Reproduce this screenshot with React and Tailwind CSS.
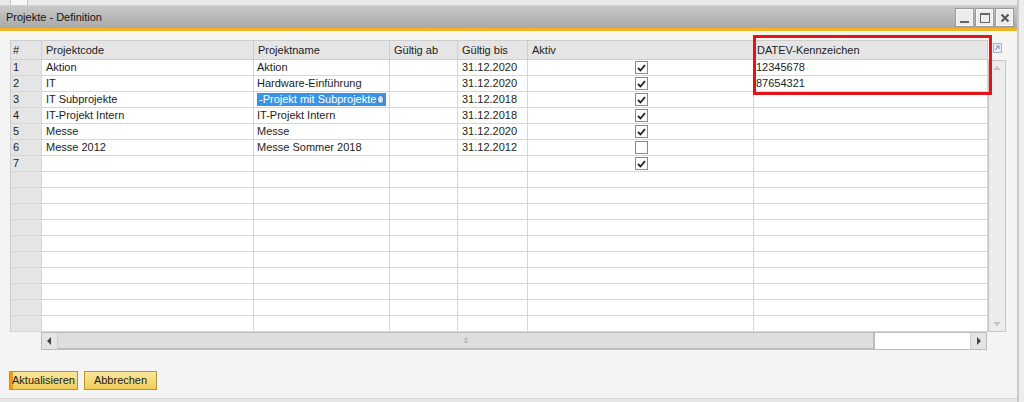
import React from 'react';

const cols = 'grid grid-cols-[31px_212px_136px_68px_70px_226px_234px]';

const rows = [
  { code: 'Aktion', name: 'Aktion', bis: '31.12.2020', aktiv: true, datev: '12345678' },
  { code: 'IT', name: 'Hardware-Einführung', bis: '31.12.2020', aktiv: true, datev: '87654321' },
  { code: 'IT Subprojekte', name: '-Projekt mit Subprojekte', bis: '31.12.2018', aktiv: true, selected: true },
  { code: 'IT-Projekt Intern', name: 'IT-Projekt Intern', bis: '31.12.2018', aktiv: true },
  { code: 'Messe', name: 'Messe', bis: '31.12.2020', aktiv: true },
  { code: 'Messe 2012', name: 'Messe Sommer 2018', bis: '31.12.2012', aktiv: false },
  { code: '', name: '', bis: '', aktiv: true },
];

const Check = ({ on }) => (
  <span className="w-[13px] h-[13px] border border-[#8a8a8a] bg-white flex items-center justify-center">
    {on && (
      <svg width="9" height="8" viewBox="0 0 9 8">
        <path d="M1 4 L3.5 6.5 L8 1" fill="none" stroke="#222" strokeWidth="1.8" />
      </svg>
    )}
  </span>
);

const cell = 'h-[16px] border-r border-b border-[#d6d6d6] px-[3px] leading-[15px] whitespace-nowrap overflow-hidden';

const WinBtn = ({ children }) => (
  <div className="w-[17px] h-[17px] bg-[#ececec] border border-[#f8f8f8] shadow-[0_0_0_1px_#9a9a9a] flex items-center justify-center">
    {children}
  </div>
);

export default function App() {
  const empty = Array.from({ length: 10 }, (_, i) => i);
  return (
    <div className="w-[1024px] h-[402px] flex bg-[#f4f4f4] overflow-hidden text-[11px] text-[#1c1c1c]" style={{ fontFamily: '"Liberation Sans", Arial, sans-serif' }}>
      <div className="w-[1017px] flex flex-col">
        {/* top strip */}
        <div className="h-[6px] bg-[#e9e9e9] border-b border-[#cfcfcf] flex">
          <div className="ml-[10px] w-[18px] border-x border-[#c4c4c4] bg-[#f7f7f7]" />
        </div>
        {/* title bar */}
        <div className="h-[22px] bg-gradient-to-b from-[#c9c9c9] to-[#a9a9a9] flex items-center pl-[6px] pr-[4px]">
          <span className="text-[11px] text-[#151515]">Projekte - Definition</span>
          <div className="ml-auto flex gap-[3px] mt-[1px]">
            <WinBtn>
              <span className="w-[9px] h-[2px] bg-[#666] mt-[8px]" />
            </WinBtn>
            <WinBtn>
              <span className="w-[10px] h-[10px] border border-[#666] border-t-2" />
            </WinBtn>
            <WinBtn>
              <svg width="10" height="10" viewBox="0 0 10 10">
                <path d="M1.5 1.5 L8.5 8.5 M8.5 1.5 L1.5 8.5" stroke="#555" strokeWidth="2" />
              </svg>
            </WinBtn>
          </div>
        </div>
        <div className="h-[3px] bg-[#efb526]" />
        <div className="h-[9px] bg-gradient-to-b from-[#fbf6ea] to-[#f5f5f5]" />

        {/* grid */}
        <div className="flex pl-[10px] relative">
          <div className="flex flex-col">
            <div className={`${cols} bg-[#e5e5e5] border-t border-l border-[#cdcdcd]`}>
              {['#', 'Projektcode', 'Projektname', 'Gültig ab', 'Gültig bis', 'Aktiv', 'DATEV-Kennzeichen'].map((h, i) => (
                <div key={h} className={`h-[19px] border-r border-b border-[#cdcdcd] leading-[18px] ${i === 0 ? 'pl-[2px]' : i === 6 ? 'pl-[3px]' : 'pl-[4px]'}`}>
                  {h}
                </div>
              ))}
            </div>
            <div className="border-l border-[#cdcdcd]">
              {rows.map((r, i) => (
                <div key={i} className={cols}>
                  <div className={`${cell} bg-[#e5e5e5] pl-[2px]`}>{i + 1}</div>
                  <div className={`${cell} bg-white pl-[4px]`}>{r.code}</div>
                  <div className={`${cell} bg-white ${r.selected ? 'p-[1px] bg-[#f7e3a0]' : ''}`}>
                    {r.selected ? (
                      <div className="h-full bg-[#3b93e8] text-white leading-[13px] pl-[2px] flex items-center">
                        <span>{r.name}</span>
                        <span className="ml-[1px] w-[7px] h-[9px] rounded-full bg-[#cfe2f5] border border-[#3a6fa0]" />
                      </div>
                    ) : (
                      r.name
                    )}
                  </div>
                  <div className={`${cell} bg-white`} />
                  <div className={`${cell} bg-white pl-[4px]`}>{r.bis}</div>
                  <div className={`${cell} bg-white flex items-center justify-center pl-[4px]`}>
                    <Check on={r.aktiv} />
                  </div>
                  <div className={`${cell} bg-white pl-[2px]`}>{r.datev || ''}</div>
                </div>
              ))}
              {empty.map((i) => (
                <div key={`e${i}`} className={cols}>
                  <div className={`${cell} bg-[#e5e5e5]`} />
                  <div className={`${cell} bg-white`} />
                  <div className={`${cell} bg-white`} />
                  <div className={`${cell} bg-white`} />
                  <div className={`${cell} bg-white`} />
                  <div className={`${cell} bg-white`} />
                  <div className={`${cell} bg-white`} />
                </div>
              ))}
            </div>
            {/* horizontal scrollbar */}
            <div className="ml-[31px] w-[946px] h-[18px] flex border border-[#bdbdbd] bg-white">
              <div className="w-[16px] bg-[#e4e4e4] flex items-center justify-center border-r border-[#cfcfcf]">
                <svg width="5" height="8" viewBox="0 0 5 8"><path d="M4 0 L0 4 L4 8 Z" fill="#444" /></svg>
              </div>
              <div className="w-[817px] bg-[#dedede] border-r-2 border-b border-[#bcbcbc] flex items-center justify-center">
                <span className="text-[7px] text-[#9a9a9a] leading-none tracking-[-1px]">⁞⁞⁞</span>
              </div>
              <div className="flex-1" />
              <div className="w-[16px] bg-[#e4e4e4] flex items-center justify-center border-l border-[#cfcfcf]">
                <svg width="5" height="8" viewBox="0 0 5 8"><path d="M1 0 L5 4 L1 8 Z" fill="#444" /></svg>
              </div>
            </div>
          </div>

          {/* vertical scrollbar */}
          <div className="flex flex-col w-[18px]">
            <div className="h-[20px] flex justify-center pt-[3px]">
              <svg width="9" height="10" viewBox="0 0 9 10">
                <rect x="0.5" y="0.5" width="8" height="9" fill="#e8eef4" stroke="#a8b4c0" />
                <path d="M2 7 L6 3 M3 3 L6 3 L6 6" stroke="#7890a8" strokeWidth="1" fill="none" />
              </svg>
            </div>
            <div className="h-[272px] border border-[#c4c4c4] bg-[#ececec] flex flex-col justify-between items-center py-[4px]">
              <svg width="8" height="5" viewBox="0 0 8 5"><path d="M0 5 L4 1 L8 5 Z" fill="#c4c4c4" /></svg>
              <svg width="8" height="5" viewBox="0 0 8 5"><path d="M0 0 L4 4 L8 0 Z" fill="#c4c4c4" /></svg>
            </div>
          </div>

          {/* highlight frame */}
          <div className="absolute left-[753px] top-[-5px] w-[239px] h-[60px] border-[3px] border-[#e2141a] pointer-events-none" />
        </div>

        {/* buttons */}
        <div className="flex gap-[6px] pl-[9px] mt-[21px]">
          <button className="h-[19px] w-[69px] border border-[#b8952c] bg-gradient-to-b from-[#fbe69a] to-[#f2cd5a] shadow-[inset_3px_0_0_#ef9a1a] text-[11px] leading-[17px] text-[#1c1c1c]">
            Aktualisieren
          </button>
          <button className="h-[19px] w-[73px] border border-[#b8952c] bg-gradient-to-b from-[#fbe69a] to-[#f2cd5a] text-[11px] leading-[17px] text-[#1c1c1c]">
            Abbrechen
          </button>
        </div>
        <div className="mt-auto h-[4px] bg-[#e6e6e6] border-t border-[#d8d8d8]" />
      </div>
      <div className="w-[7px] border-l-2 border-[#c9c9c9] bg-[#ededed]" />
    </div>
  );
}
